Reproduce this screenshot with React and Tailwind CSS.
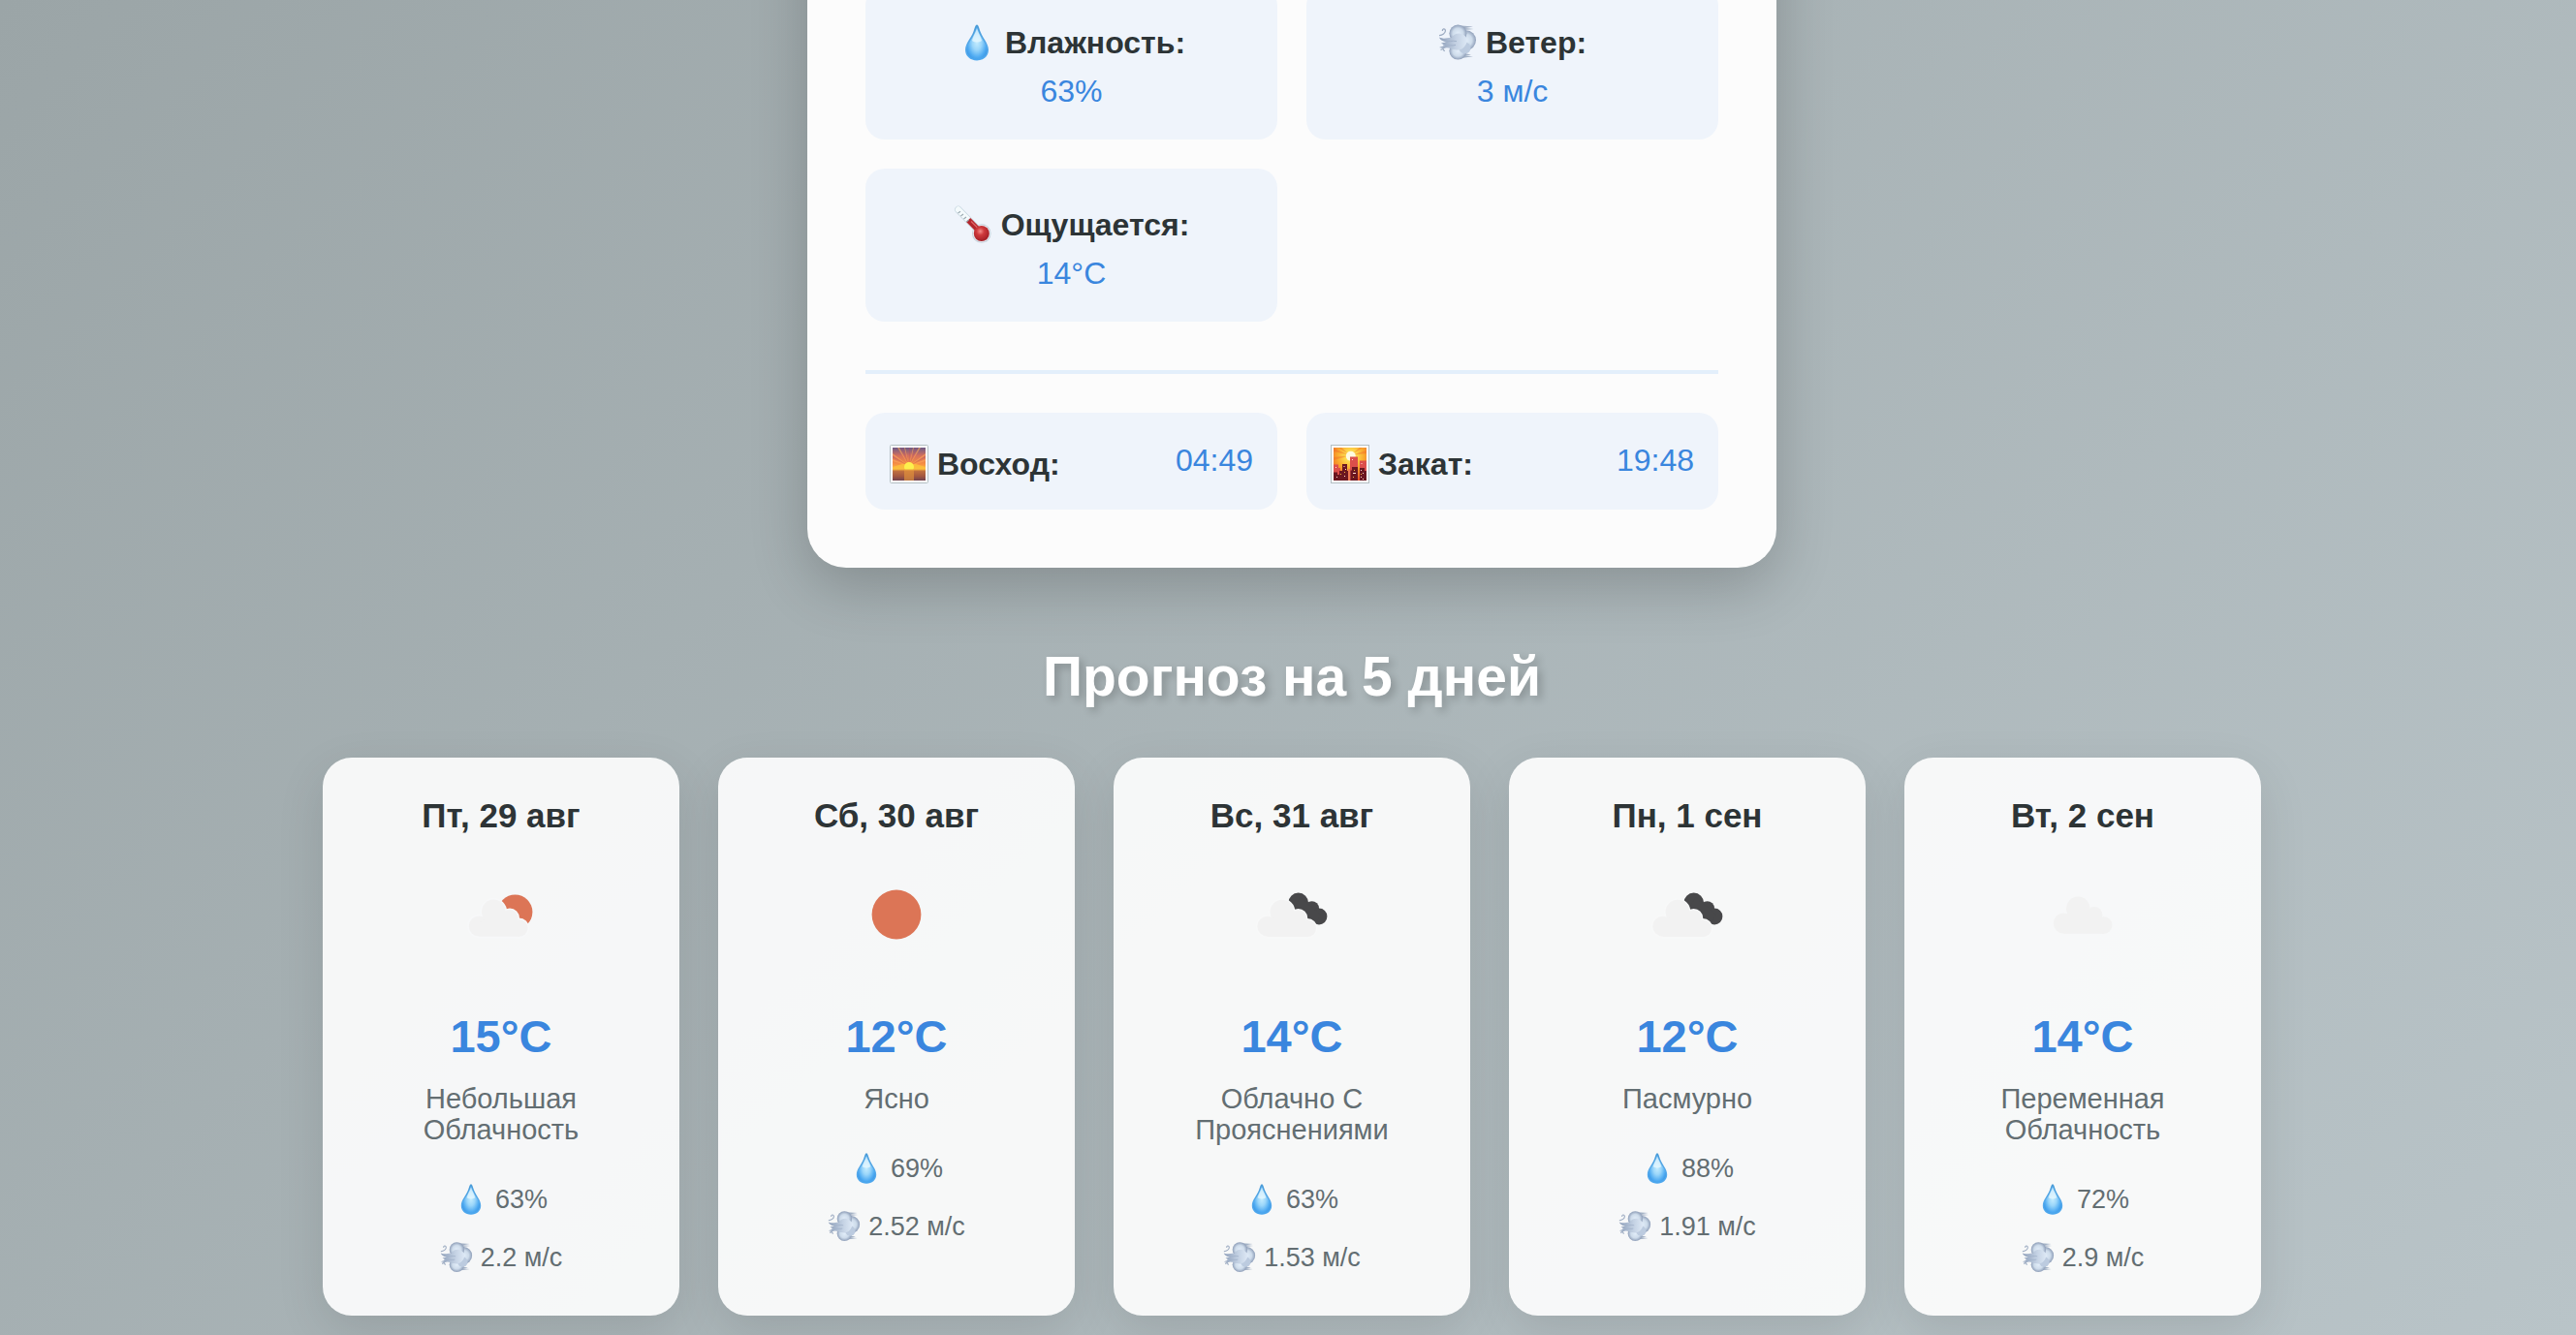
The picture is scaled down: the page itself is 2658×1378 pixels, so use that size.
import React from 'react';

function Drop({ className }) {
  return (
    <svg viewBox="0 0 40 40" className={className} aria-hidden="true">
      <defs>
        <linearGradient id="dropEdge" x1="0" y1="0" x2="0" y2="1">
          <stop offset="0" stopColor="#4a9bd6" />
          <stop offset="0.6" stopColor="#56a9ea" />
          <stop offset="1" stopColor="#4aa6ee" />
        </linearGradient>
        <radialGradient id="dropFill" cx="0.5" cy="0.5" r="0.58">
          <stop offset="0" stopColor="#c4ecfe" />
          <stop offset="0.4" stopColor="#9bd6fa" />
          <stop offset="0.8" stopColor="#4fabf2" />
          <stop offset="1" stopColor="#3d97e4" />
        </radialGradient>
      </defs>
      <path d="M20 1.5C21.6 1.5 22 4.4 23.6 8.8C26 15.4 32 20.8 32 27.6C32 34 26.8 38.5 20 38.5S8 34 8 27.6C8 20.8 14 15.4 16.4 8.8C18 4.4 18.4 1.5 20 1.5Z" fill="url(#dropEdge)" />
      <path d="M20 3.5C21 6 22 9.5 23.8 13C26.5 18.4 30.4 22 30.4 27.4C30.4 33 25.8 36.4 20 36.4S9.6 33 9.6 27.4C9.6 22 13.5 18.4 16.2 13C18 9.5 19 6 20 3.5Z" fill="url(#dropFill)" />
      <path d="M20 5C21 9 24 14 25 18C22 20 18 20 15 18C16 14 19 9 20 5Z" fill="#eefbff" opacity="0.7" />
    </svg>
  );
}

function Wind({ className }) {
  return (
    <svg viewBox="0 0 40 40" className={className} aria-hidden="true">
      <defs>
        <radialGradient id="puff" cx="0.5" cy="0.5" r="0.5">
          <stop offset="0" stopColor="#e2edf9" />
          <stop offset="0.6" stopColor="#cddbea" />
          <stop offset="1" stopColor="#8f9fb9" />
        </radialGradient>
        <linearGradient id="gust" x1="0" y1="0" x2="1" y2="0">
          <stop offset="0" stopColor="#8c9db8" />
          <stop offset="0.6" stopColor="#c3d1e3" />
          <stop offset="1" stopColor="#dde8f5" />
        </linearGradient>
      </defs>
      <path d="M24 2.6L36 3.6L28 5L36.5 6L27 7Z M24 36L36 34.2L28 33.4L34 32.5L27 31Z" fill="#a3b1c5" />
      <circle cx="28.6" cy="17.6" r="10.4" fill="url(#puff)" />
      <circle cx="20.4" cy="10.6" r="9" fill="url(#puff)" />
      <circle cx="20.4" cy="28.6" r="9" fill="url(#puff)" />
      <circle cx="27.5" cy="25.5" r="6" fill="#bccbdf" />
      <path d="M1 14.6C6 17 10 14.5 14 15C16 11 20 9.5 24 11C29 13 31.5 17 28.5 22C25.5 27 22 28.5 17 27C13 27 10 24 6 26L1 25L7 23L3 20.6L8 19.4C4 18.6 2 17 1 14.6Z" fill="url(#gust)" />
      <path d="M6 18C11 19.5 14 17.5 19 18.6M5 23C11 21.5 14 24 18 22.4" fill="none" stroke="#a2b2ca" strokeWidth="1" />
      <path d="M1 12.6C4 12.4 8 10.4 7.4 7.2C6.8 5 4 5.6 4.4 8M2.5 27.5L5 26.5L6.5 29" fill="none" stroke="#9cabc1" strokeWidth="1.3" />
    </svg>
  );
}

function Thermometer({ className }) {
  return (
    <svg viewBox="0 0 40 40" className={className} aria-hidden="true">
      <defs>
        <radialGradient id="bulb" cx="0.42" cy="0.36" r="0.62">
          <stop offset="0" stopColor="#f48c8a" />
          <stop offset="0.4" stopColor="#cf3a3c" />
          <stop offset="1" stopColor="#a51f26" />
        </radialGradient>
      </defs>
      <path d="M4.8 4.3L27 27" stroke="#c5d5de" strokeWidth="7.4" strokeLinecap="round" />
      <circle cx="28.8" cy="29" r="9.8" fill="#c3d0da" />
      <path d="M4.8 4.3L27 27" stroke="#f4fafc" strokeWidth="6" strokeLinecap="round" />
      <circle cx="28.8" cy="29" r="9" fill="#e6e9ef" />
      <path d="M15.2 15L27 27" stroke="#b3262d" strokeWidth="6" />
      <path d="M18 16.5L26 24.5" stroke="#df6668" strokeWidth="1.2" />
      <circle cx="28.8" cy="29" r="8" fill="url(#bulb)" />
      <path d="M4.5 8L7 6.2M7.4 11L10 9M10.4 14L13 12M13.2 17L15.5 15" stroke="#9babb2" strokeWidth="1.1" />
    </svg>
  );
}

function Sunrise({ className }) {
  return (
    <svg viewBox="0 0 40 40" className={className} aria-hidden="true">
      <defs>
        <linearGradient id="dawn" x1="0" y1="0" x2="0" y2="1">
          <stop offset="0" stopColor="#6d5a86" />
          <stop offset="0.25" stopColor="#d5705c" />
          <stop offset="0.5" stopColor="#f78f42" />
          <stop offset="0.68" stopColor="#fcc544" />
        </linearGradient>
        <linearGradient id="sea" x1="0" y1="0" x2="0" y2="1">
          <stop offset="0" stopColor="#c8763f" />
          <stop offset="0.6" stopColor="#a3573f" />
          <stop offset="1" stopColor="#71424f" />
        </linearGradient>
      </defs>
      <rect x="0.5" y="0.5" width="39" height="39" rx="1" fill="#fff" stroke="#b3bfc3" />
      <rect x="3" y="3" width="34" height="34" fill="url(#dawn)" />
      <path d="M20 22L3 11V9ZM20 22L8 3H10ZM20 22L15 3H16ZM20 22L24 3H25ZM20 22L30 3H32ZM20 22L37 9V11ZM20 22L3 17V15ZM20 22L37 15V17Z" fill="#ffa858" opacity="0.6" />
      <path d="M20 22L3 13V12ZM20 22L12 3H13ZM20 22L20 3H21ZM20 22L27 3H28ZM20 22L37 12V13Z" fill="#b2506a" opacity="0.5" />
      <path d="M3 26V23L13 20H27L37 23V26Z" fill="#fbc23c" opacity="0.8" />
      <circle cx="20" cy="23" r="5" fill="#fdf04d" />
      <rect x="3" y="25.8" width="34" height="11.2" fill="url(#sea)" />
      <rect x="15" y="26" width="10" height="11" fill="#e0903c" opacity="0.7" />
      <path d="M3 26H37" stroke="#f5ae40" strokeWidth="0.8" />
    </svg>
  );
}

function Sunset({ className }) {
  return (
    <svg viewBox="0 0 40 40" className={className} aria-hidden="true">
      <defs>
        <radialGradient id="dusk" cx="0.52" cy="0.26" r="0.75">
          <stop offset="0" stopColor="#fffbd0" />
          <stop offset="0.18" stopColor="#fde253" />
          <stop offset="0.55" stopColor="#f9a72c" />
          <stop offset="1" stopColor="#e8502a" />
        </radialGradient>
      </defs>
      <rect x="0.5" y="0.5" width="39" height="39" fill="#fff" stroke="#b3bfc3" />
      <rect x="3" y="3" width="34" height="34" fill="url(#dusk)" />
      <path d="M20.5 11L3 4V7ZM20.5 11L8 3H11ZM20.5 11L30 3H33ZM20.5 11L37 6V9ZM20.5 11L3 13V16Z" fill="#ef6a2a" opacity="0.45" />
      <circle cx="20.8" cy="11.8" r="5" fill="#fffbe0" />
      <path d="M20 37V12.5H28V37ZM30 37V16.5H37V37ZM3 37V20.5H8V24H10V37Z" fill="#dc4f4b" />
      <path d="M3 37V28.5H7V31H9V27H12V20H17V27H19V37ZM20.5 37V26.5H22V23H28V37ZM30 37V24H35V27H37V37Z" fill="#6b1720" />
      <path d="M18 25H20V37H18Z" fill="#ee7a54" />
      <path d="M22 15H23V16H22ZM31.5 19H32.5V20H31.5ZM13.5 22H14.5V23H13.5ZM15 25H16V26H15ZM5 23H6V24H5ZM23 29H26V30H23ZM31 26H32V27H31ZM33 29H34V30H33ZM31 33H32V34H31ZM14 32H15V33H14ZM6 33H7V34H6ZM33 35H34V36H33Z" fill="#ffd9cf" />
      <path d="M24 26H25V27H24ZM14 28H15V29H14ZM23 33H24V34H23ZM31 30H32V31H31ZM10 30H11V31H10Z" fill="#f5b23c" />
    </svg>
  );
}

function CloudShape(props) {
  return (
    <g {...props}>
      <circle cx="40.3" cy="69" r="10.5" />
      <circle cx="55.3" cy="53.9" r="12.3" />
      <circle cx="72" cy="60.5" r="8.5" />
      <circle cx="81.5" cy="71" r="9" />
      <path d="M40.3 79.7V66L48 60H74L81.5 66V79.7Z" />
    </g>
  );
}

function WeatherIcon({ kind }) {
  return (
    <svg viewBox="0 0 120 120" className="mx-auto mt-[22px] size-[120px]" role="img" aria-label={kind}>
      {kind === 'sun' && <circle cx="60" cy="60" r="25.4" fill="#dc7556" />}
      {kind === 'few' && (
        <>
          <circle cx="74.5" cy="57.3" r="17.9" fill="#dc7556" />
          <g transform="translate(-3 3)">
            <CloudShape fill="#f7f8f9" stroke="#f7f8f9" strokeWidth="3" />
            <CloudShape fill="#f2f2f2" />
          </g>
        </>
      )}
      {kind === 'broken' && (
        <>
          <g fill="#48484a">
            <circle cx="66.7" cy="48" r="10.4" />
            <circle cx="80.6" cy="53.6" r="7.4" />
            <circle cx="88" cy="62" r="8.4" />
            <path d="M60 60L68 42L90 60L84 70Z" />
          </g>
          <g transform="translate(-5.5 3.2)">
            <CloudShape fill="#f8f9f9" stroke="#f8f9f9" strokeWidth="2.5" />
            <CloudShape fill="#f2f2f2" />
          </g>
        </>
      )}
      {kind === 'cloud' && <CloudShape fill="#f2f2f2" />}
    </svg>
  );
}

const stats = [
  { icon: Drop, label: 'Влажность:', value: '63%' },
  { icon: Wind, label: 'Ветер:', value: '3 м/с' },
  { icon: Thermometer, label: 'Ощущается:', value: '14°C' },
];

const sunTimes = [
  { icon: Sunrise, label: 'Восход:', value: '04:49' },
  { icon: Sunset, label: 'Закат:', value: '19:48' },
];

const days = [
  { date: 'Пт, 29 авг', kind: 'few', temp: '15°C', text: 'Небольшая Облачность', humidity: '63%', wind: '2.2 м/с' },
  { date: 'Сб, 30 авг', kind: 'sun', temp: '12°C', text: 'Ясно', humidity: '69%', wind: '2.52 м/с' },
  { date: 'Вс, 31 авг', kind: 'broken', temp: '14°C', text: 'Облачно С Прояснениями', humidity: '63%', wind: '1.53 м/с' },
  { date: 'Пн, 1 сен', kind: 'broken', temp: '12°C', text: 'Пасмурно', humidity: '88%', wind: '1.91 м/с' },
  { date: 'Вт, 2 сен', kind: 'cloud', temp: '14°C', text: 'Переменная Облачность', humidity: '72%', wind: '2.9 м/с' },
];

function Stat({ icon: Icon, label, value }) {
  return (
    <div className="rounded-[20px] bg-[#eff4fb] px-6 pt-[38px] pb-[30px] text-center text-[32px] leading-10">
      <dt className="flex items-center justify-center gap-[9px] font-bold text-[#2d3436]">
        <Icon className="size-10" />
        {label}
      </dt>
      <dd className="mt-[10px] text-[#3a86de]">{value}</dd>
    </div>
  );
}

function SunTime({ icon: Icon, label, value }) {
  return (
    <div className="flex items-start justify-between rounded-[20px] bg-[#eff4fb] px-[25px] pt-[25px] pb-[19px] text-[32px]">
      <dt className="flex items-center gap-[9px] leading-[56px] font-bold text-[#2d3436]">
        <Icon className="size-10" />
        {label}
      </dt>
      <dd className="leading-[48px] text-[#3a86de]">{value}</dd>
    </div>
  );
}

function Day({ date, kind, temp, text, humidity, wind }) {
  return (
    <li className="rounded-[30px] bg-white/90 px-10 py-10 text-center text-[#636e72] shadow-[0_16px_50px_rgba(0,0,0,0.1)]">
      <h3 className="text-[35px] leading-10 font-bold text-[#2d3436]">{date}</h3>
      <WeatherIcon kind={kind} />
      <p className="mt-[38px] text-[47px] leading-[56px] font-bold text-[#3a86de]">{temp}</p>
      <p className="mt-5 text-[29px] leading-8">{text}</p>
      <div className="mt-9 flex flex-col gap-5 text-[27px] leading-10">
        <p className="flex items-center justify-center gap-2">
          <Drop className="size-[34px]" />
          {humidity}
        </p>
        <p className="flex items-center justify-center gap-2">
          <Wind className="size-[34px]" />
          {wind}
        </p>
      </div>
    </li>
  );
}

export default function App() {
  return (
    <main className="min-h-screen overflow-hidden bg-linear-[135deg] from-[#9ba5a7] to-[#b9c4c8] pb-5 pl-2 font-['Liberation_Sans',Arial,sans-serif]">
      <section className="mx-auto -mt-[200px] max-w-[1000px] rounded-[40px] bg-[#fcfcfc] px-[60px] pt-[186px] pb-[60px] shadow-[0_20px_60px_rgba(0,0,0,0.2)]">
        <dl className="grid grid-cols-2 gap-[30px]">
          {stats.map((s) => (
            <Stat key={s.label} {...s} />
          ))}
        </dl>
        <dl className="mt-[50px] grid grid-cols-2 gap-[30px] border-t-4 border-[#e3effb] pt-10">
          {sunTimes.map((s) => (
            <SunTime key={s.label} {...s} />
          ))}
        </dl>
      </section>

      <section className="mx-auto mt-20 max-w-[2000px]">
        <h2 className="text-center text-[57px] leading-[64px] font-bold text-white [text-shadow:4px_4px_8px_rgba(0,0,0,0.2)]">
          Прогноз на 5 дней
        </h2>
        <ul className="mt-[52px] grid grid-cols-5 gap-10">
          {days.map((d) => (
            <Day key={d.date} {...d} />
          ))}
        </ul>
      </section>
    </main>
  );
}
